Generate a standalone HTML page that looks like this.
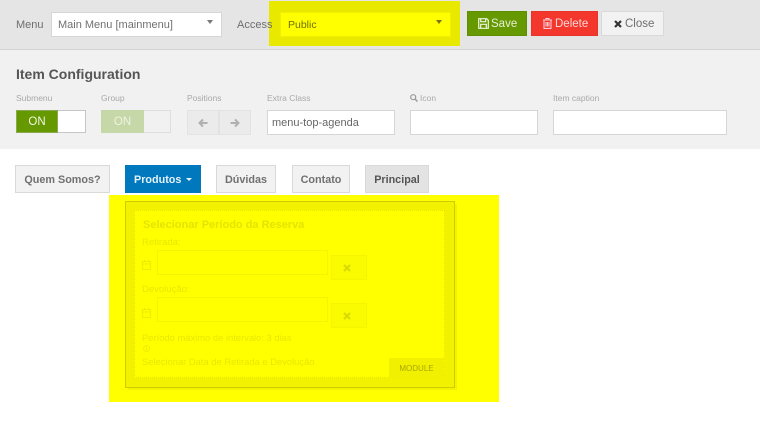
<!DOCTYPE html>
<html><head><meta charset="utf-8">
<style>
html,body{margin:0;padding:0;background:#fff}
#p{position:relative;width:760px;height:429px;overflow:hidden;font-family:"Liberation Sans",sans-serif;filter:blur(.35px);background:#fff}
#p div,#p svg{position:absolute;box-sizing:border-box}
.t{white-space:nowrap}
.inp{background:#fff;border:1px solid #d6d6d6}
.lab{font-size:8.5px;color:#a9a9a9;line-height:11px}
.nav{height:28px;border:1px solid #d9d9d9;background:#f2f2f2;color:#707070;font-weight:bold;font-size:10.800px;line-height:28px;text-align:center}
.y{color:#e8e800}
</style></head><body>
<div id="p">
<div style="left:0;top:0;width:760px;height:50px;background:#e5e5e5;border-bottom:1px solid #d2d2d2"></div>
<div style="left:0;top:50px;width:760px;height:99px;background:#f1f1f1"></div>

<div class="t" style="left:16px;top:19px;font-size:11px;color:#6e6e6e;line-height:13px">Menu</div>
<div class="inp" style="left:51px;top:12px;width:171px;height:25px;font-size:11px;color:#707070;line-height:24px;padding-left:6px">Main Menu [mainmenu]</div>
<svg style="left:207px;top:20px" width="6" height="4"><path d="M0 0h6L3 4z" fill="#777"/></svg>

<div style="left:269px;top:1px;width:191px;height:45px;background:#e9e900"></div>
<div class="t" style="left:237px;top:19px;font-size:11px;color:#6e6e6e;line-height:13px">Access</div>
<div style="left:280px;top:12px;width:171px;height:25px;background:#ff0;border:1px solid #f0f000;font-size:10.500px;color:#6f6f00;line-height:24px;padding-left:7px">Public</div>
<svg style="left:436px;top:20px" width="6" height="4"><path d="M0 0h6L3 4z" fill="#77771a"/></svg>

<div style="left:467px;top:11px;width:60px;height:25px;background:#669900;border:1px solid #5f8f00;color:#e8f0d8;font-size:11.500px;line-height:24px;padding-left:23px">Save</div>
<svg style="left:478px;top:18px" width="11" height="11" viewBox="0 0 11 11"><path d="M.7.7h8l1.600 1.600v8H.7zM2.700.7v3h5v-3M2.700 10.300v-4h5.600v4" fill="none" stroke="#eef4e0" stroke-width="1.200"/></svg>
<div style="left:531px;top:11px;width:67px;height:25px;background:#f4372d;border:1px solid #e8352c;color:#fbd9d6;font-size:11.500px;line-height:24px;padding-left:23px">Delete</div>
<svg style="left:543px;top:18px" width="9" height="11" viewBox="0 0 9 11"><path d="M0 2h9M3 2V.6h3V2M1 2v8.400h7V2M3 4v4.500M4.500 4v4.500M6 4v4.500" fill="none" stroke="#fbc8d4" stroke-width="1.100"/></svg>
<div style="left:601px;top:11px;width:63px;height:25px;background:#f2f2f2;border:1px solid #d9d9d9;color:#6e6e6e;font-size:11.500px;line-height:24px;padding-left:23px">Close</div>
<svg style="left:614px;top:20px" width="8" height="8" viewBox="0 0 8 8"><path d="M1 1l6 6M7 1L1 7" stroke="#333" stroke-width="2.200"/></svg>

<div class="t" style="left:16px;top:66px;font-size:14px;font-weight:bold;color:#555;line-height:16px">Item Configuration</div>

<div class="lab t" style="left:16px;top:93px">Submenu</div>
<div style="left:16px;top:110px;width:70px;height:23px;border:1px solid #c6c6c6;background:#fff"></div>
<div style="left:16px;top:110px;width:42px;height:23px;background:#669900;border:1px solid #8aa850;color:#f0f5e6;font-size:11.500px;line-height:23px;text-align:center">ON</div>

<div class="lab t" style="left:101px;top:93px">Group</div>
<div style="left:101px;top:110px;width:70px;height:23px;border:1px solid #dedede;background:#f1f1f1"></div>
<div style="left:101px;top:110px;width:43px;height:23px;background:#c6d7a8;color:#eef3e3;font-size:11.500px;line-height:25px;text-align:center">ON</div>

<div class="lab t" style="left:187px;top:93px">Positions</div>
<div style="left:187px;top:110px;width:32px;height:25px;background:#ebebeb;border:1px solid #e3e3e3"></div>
<div style="left:219px;top:110px;width:32px;height:25px;background:#ebebeb;border:1px solid #e3e3e3"></div>
<svg style="left:198px;top:118px" width="10" height="10" viewBox="0 0 10 10"><path d="M9.500 5H1.500M5 1.500L1.500 5 5 8.500" fill="none" stroke="#b0b0b0" stroke-width="2"/></svg>
<svg style="left:230px;top:118px" width="10" height="10" viewBox="0 0 10 10"><path d="M.5 5H8.500M5 1.500L8.500 5 5 8.500" fill="none" stroke="#b0b0b0" stroke-width="2"/></svg>

<div class="lab t" style="left:267px;top:93px">Extra Class</div>
<div class="inp" style="left:267px;top:110px;width:128px;height:25px;font-size:11px;color:#666;line-height:24px;padding-left:4px">menu-top-agenda</div>

<svg style="left:410px;top:94px" width="8" height="8" viewBox="0 0 8 8"><circle cx="3.200" cy="3.200" r="2.500" fill="none" stroke="#999" stroke-width="1.200"/><path d="M5 5l2.500 2.500" stroke="#999" stroke-width="1.500"/></svg>
<div class="lab t" style="left:420px;top:93px">Icon</div>
<div class="inp" style="left:410px;top:110px;width:128px;height:25px"></div>
<div class="lab t" style="left:553px;top:93px">Item caption</div>
<div class="inp" style="left:553px;top:110px;width:174px;height:25px"></div>

<div class="nav" style="left:15px;top:165px;width:95px">Quem Somos?</div>
<div class="nav" style="left:125px;top:165px;width:76px;background:#0078bd;border-color:#0078bd;color:#e6f2f9;text-align:left;padding-left:8px">Produtos</div>
<svg style="left:186px;top:178px" width="6" height="3"><path d="M0 0h6L3 3z" fill="#e6f2f9"/></svg>
<div class="nav" style="left:216px;top:165px;width:60px">Dúvidas</div>
<div class="nav" style="left:292px;top:165px;width:58px">Contato</div>
<div class="nav" style="left:365px;top:165px;width:64px;background:#e3e3e3;color:#555">Principal</div>

<div style="left:109px;top:195px;width:390px;height:207px;background:#ff0"></div>
<div style="left:128px;top:204px;width:329px;height:186px;background:#f3f300"></div>
<div style="left:125px;top:201px;width:330px;height:187px;background:#f1f100;border:1px solid #cccc00"></div>
<div style="left:134px;top:210px;width:311px;height:168px;background:#ff0;border:1px dotted #e6e600"></div>
<div class="t y" style="left:143px;top:218px;font-size:11px;font-weight:bold;line-height:14px;color:#e4e400">Selecionar Período da Reserva</div>
<div class="t y" style="left:142px;top:237px;font-size:9.500px;line-height:12px">Retirada:</div>
<div style="left:157px;top:250px;width:171px;height:25px;border:1px solid #f4f400"></div>
<svg style="left:142px;top:260px" width="9" height="10" viewBox="0 0 9 10"><path d="M.5 1.500h8v8h-8zM.5 4h8M2.500 0v2M6.500 0v2" fill="none" stroke="#e8e800" stroke-width=".8"/></svg>
<div style="left:331px;top:255px;width:36px;height:25px;background:#fafa00;border:1px solid #f5f500"></div>
<svg style="left:343px;top:264px" width="8" height="8" viewBox="0 0 8 8"><path d="M1 1l6 6M7 1L1 7" stroke="#d8d800" stroke-width="2"/></svg>
<div class="t y" style="left:142px;top:284px;font-size:9.500px;line-height:12px">Devolução:</div>
<div style="left:157px;top:297px;width:171px;height:25px;border:1px solid #f4f400"></div>
<svg style="left:142px;top:308px" width="9" height="10" viewBox="0 0 9 10"><path d="M.5 1.500h8v8h-8zM.5 4h8M2.500 0v2M6.500 0v2" fill="none" stroke="#e8e800" stroke-width=".8"/></svg>
<div style="left:331px;top:303px;width:36px;height:25px;background:#fafa00;border:1px solid #f5f500"></div>
<svg style="left:343px;top:312px" width="8" height="8" viewBox="0 0 8 8"><path d="M1 1l6 6M7 1L1 7" stroke="#d8d800" stroke-width="2"/></svg>
<div class="t y" style="left:142px;top:332px;font-size:9.400px;line-height:12px">Período máximo de intervalo: 3 dias</div>
<svg style="left:143px;top:345px" width="7" height="7" viewBox="0 0 7 7"><circle cx="3.500" cy="3.500" r="3" fill="none" stroke="#eeee00"/><path d="M3.500 2v3" stroke="#eeee00"/></svg>
<div class="t y" style="left:142px;top:356px;font-size:9.400px;line-height:12px">Selecionar Data de Retirada e Devolução</div>
<div style="left:389px;top:358px;width:55px;height:20px;background:#f0f000;color:#a8a800;font-size:8px;line-height:21px;text-align:center">MODULE</div>
</div>
</body></html>
